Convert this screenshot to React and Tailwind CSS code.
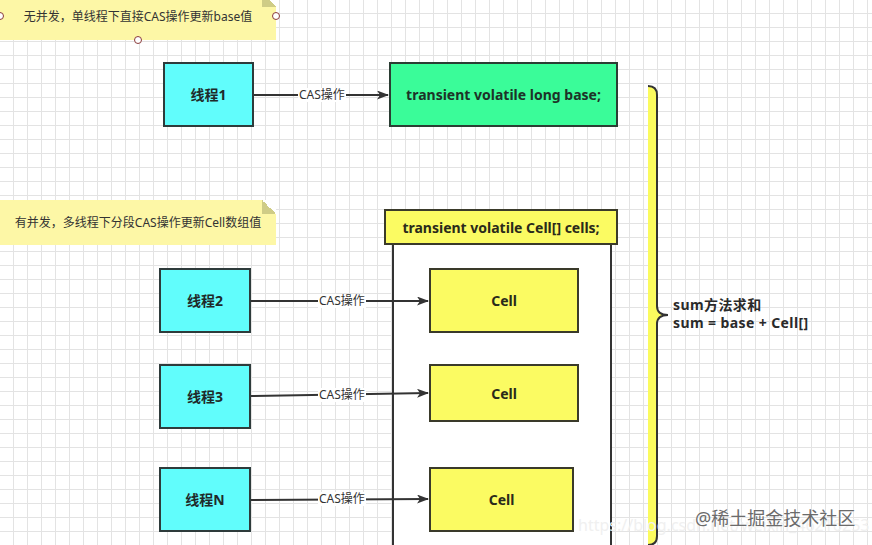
import React from "react";

const FONT = "font-['Noto_Sans','Noto_Sans_CJK_SC',sans-serif]";

// 线程节点
function ThreadBox({ className, label }) {
  return (
    <div
      className={`absolute flex items-center justify-center border-2 border-[#2e3b3b] bg-[#61fdfc] text-[14px] font-bold text-[#1f2a2a] ${className}`}
    >
      {label}
    </div>
  );
}

function CellBox({ className }) {
  return (
    <div
      className={`absolute flex items-center justify-center border-2 border-[#3a3a2a] bg-[#fbfb62] text-[14px] font-bold text-[#2a2a1a] ${className}`}
    >
      Cell
    </div>
  );
}

function EdgeLabel({ className }) {
  return (
    <span className={`absolute bg-white px-[1px] text-[12px] leading-[14px] text-[#333] ${className}`}>
      CAS操作
    </span>
  );
}

function Note({ className, text }) {
  return (
    <div className={`absolute flex items-center justify-center bg-[#fdf7a6] text-[12px] text-[#333] ${className}`}>
      <span>{text}</span>
      <div className="absolute right-0 top-0 h-[14px] w-[14px] bg-[linear-gradient(225deg,#ffffff_50%,#cfcc86_50%)]" />
    </div>
  );
}

function Handle({ className }) {
  return (
    <div className={`absolute h-[8px] w-[8px] rounded-full border border-[#8a3b3b] bg-white ${className}`} />
  );
}

export default function App() {
  return (
    <div
      className={`relative h-[545px] w-[872px] overflow-hidden bg-white bg-[linear-gradient(to_right,#e3e3e3_1px,transparent_1px),linear-gradient(to_bottom,#e3e3e3_1px,transparent_1px)] bg-size-[14px_14px] bg-position-[13px_13px] ${FONT}`}
    >
      {/* 说明便签 */}
      <Note className="left-0 top-[-7px] h-[47px] w-[276px]" text="无并发，单线程下直接CAS操作更新base值" />
      <Handle className="left-[-4px] top-[12px]" />
      <Handle className="left-[272px] top-[12px]" />
      <Handle className="left-[134px] top-[36px]" />

      <Note className="left-0 top-[200px] h-[45px] w-[276px]" text="有并发，多线程下分段CAS操作更新Cell数组值" />

      {/* cells 容器 */}
      <div className="absolute left-[392px] top-[243px] h-[320px] w-[220px] border-x-2 border-[#333] bg-white" />
      <div className="absolute left-[384px] top-[209px] flex h-[36px] w-[234px] items-center justify-center border-2 border-[#3a3a2a] bg-[#fbfb62] text-[14px] font-bold text-[#2a2a1a]">
        transient volatile Cell[] cells;
      </div>

      {/* base */}
      <div className="absolute left-[389px] top-[62px] flex h-[65px] w-[229px] items-center justify-center border-2 border-[#2b3d33] bg-[#3afc99] text-[14px] font-bold text-[#1d3328]">
        transient volatile long base;
      </div>

      <ThreadBox className="left-[163px] top-[62px] h-[65px] w-[91px]" label="线程1" />
      <ThreadBox className="left-[159px] top-[268px] h-[65px] w-[92px]" label="线程2" />
      <ThreadBox className="left-[159px] top-[364px] h-[65px] w-[92px]" label="线程3" />
      <ThreadBox className="left-[159px] top-[467px] h-[65px] w-[92px]" label="线程N" />

      <CellBox className="left-[429px] top-[268px] h-[65px] w-[150px]" />
      <CellBox className="left-[429px] top-[364px] h-[58px] w-[150px]" />
      <CellBox className="left-[429px] top-[467px] h-[65px] w-[145px]" />

      {/* 连线与大括号 */}
      <svg className="pointer-events-none absolute left-0 top-0" width="872" height="545">
        <defs>
          <marker id="arr" markerWidth="12" markerHeight="9" refX="11" refY="4.5" orient="auto" markerUnits="userSpaceOnUse">
            <path d="M0,0 L12,4.5 L0,9 L3,4.5 Z" fill="#333" />
          </marker>
        </defs>
        <g stroke="#333" strokeWidth="2" fill="none">
          <line x1="254" y1="95" x2="388" y2="95" markerEnd="url(#arr)" />
          <line x1="251" y1="301" x2="428" y2="301" markerEnd="url(#arr)" />
          <line x1="251" y1="396" x2="428" y2="393" markerEnd="url(#arr)" />
          <line x1="251" y1="500" x2="428" y2="499" markerEnd="url(#arr)" />
        </g>
        <path
          d="M648,86 Q657,86 657,95 L657,306 Q657,315 668,315 Q657,315 657,324 L657,536 Q657,545 648,545 Z"
          fill="#fbfb5e"
          stroke="none"
        />
        <path
          d="M648,86 Q657,86 657,95 L657,306 Q657,315 668,315 Q657,315 657,324 L657,536 Q657,545 648,545"
          fill="none"
          stroke="#333"
          strokeWidth="2"
        />
      </svg>

      <EdgeLabel className="left-[298px] top-[88px]" />
      <EdgeLabel className="left-[318px] top-[294px]" />
      <EdgeLabel className="left-[318px] top-[388px]" />
      <EdgeLabel className="left-[318px] top-[492px]" />

      {/* 求和说明 */}
      <div className="absolute left-[673px] top-[296px] text-[14px] font-bold leading-[18px] tracking-[0.4px] text-[#2a2a2a]">
        <div>sum方法求和</div>
        <div>sum = base + Cell[]</div>
      </div>

      {/* 水印 */}
      <div className="absolute left-[578px] top-[513px] text-[16px] text-[#f0f0f0]">
        https://blog.csdn.net/weixin_46216253
      </div>
      <div className="absolute left-[695px] top-[505px] text-[18px] text-[#6b6b6b] [text-shadow:0_0_2px_#fff]">
        @稀土掘金技术社区
      </div>
    </div>
  );
}
